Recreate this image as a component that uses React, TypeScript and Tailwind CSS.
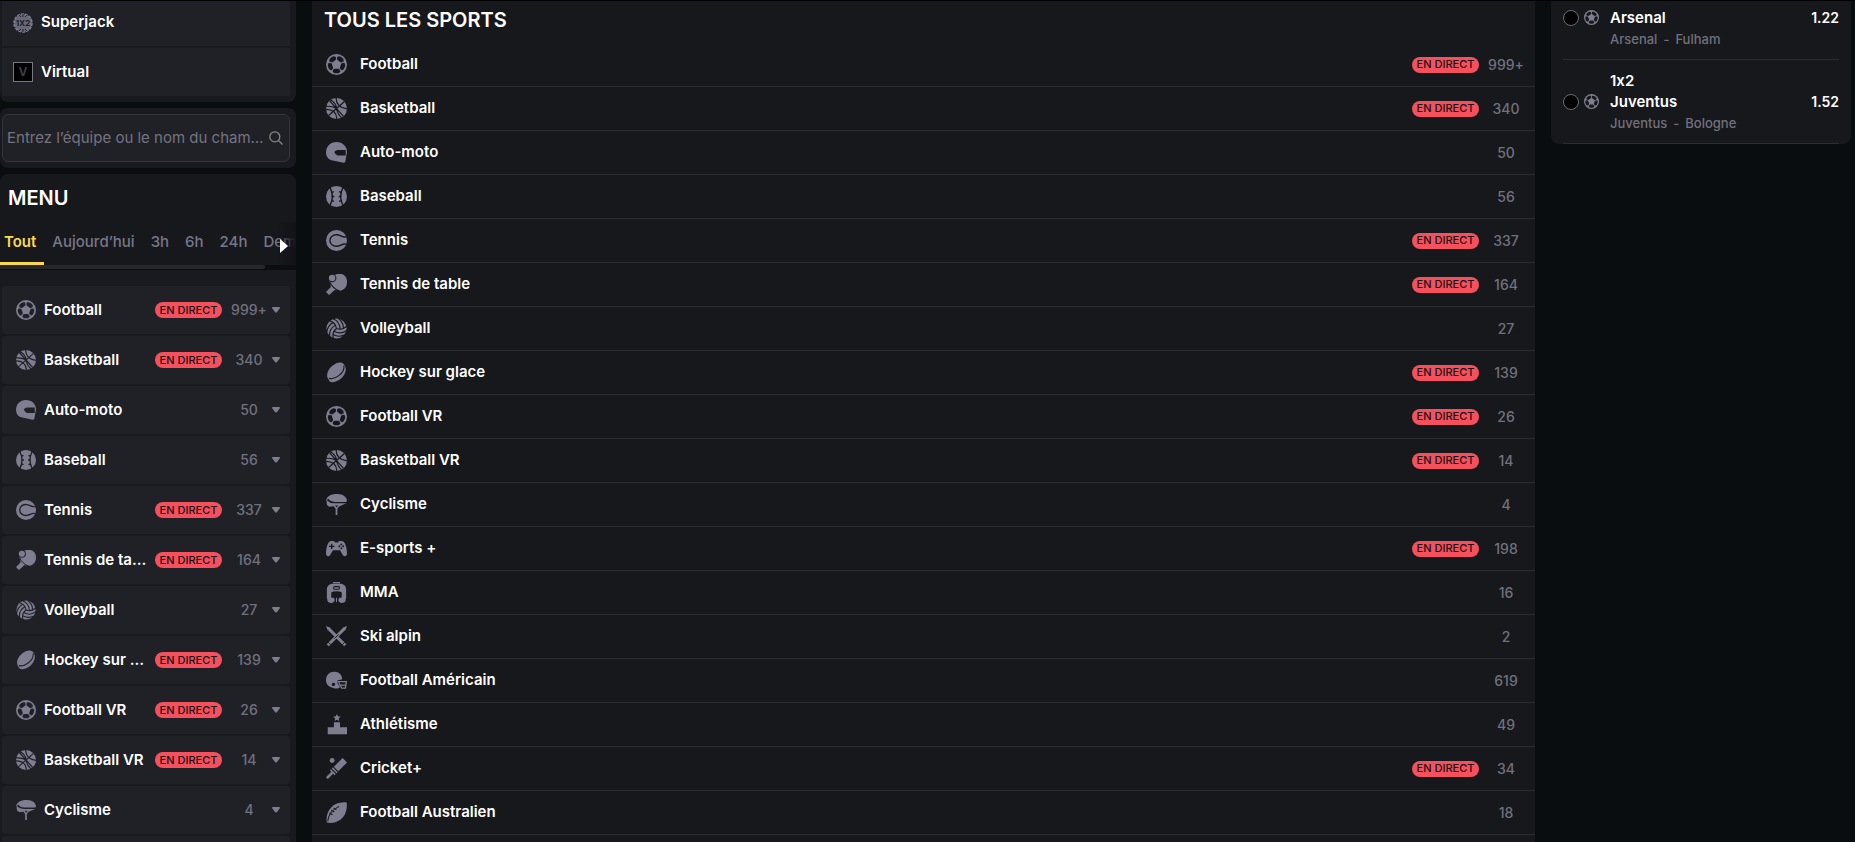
import React, { ReactNode } from "react";

const G = "#7f7e90";

const shapes: Record<string, ReactNode> = {
  football: (
    <>
      <circle cx="12" cy="12" r="12" fill={G} />
      {[0, 72, 144, 216, 288].map((a) => (
        <path
          key={a}
          fill="currentColor"
          transform={`rotate(${a} 12 12)`}
          d="M10 16.800h4q.8 0 1.300.7l1 1.700q.3.8-.4 1.400l-1.200 1q-2.700.8-5.400 0l-1.200-1q-.7-.6-.4-1.400l1-1.700q.5-.7 1.300-.7z"
        />
      ))}
    </>
  ),
  basketball: (
    <>
      <circle cx="12" cy="12" r="12" fill={G} />
      <g fill="none" stroke="currentColor" strokeWidth="1.400">
        <path d="M4 3l16 18M21 4 3 20M11.500 0Q12 11 24 12.500M5 2Q12 6 12 12M0 9.500Q7 9 12 12M0 13Q12 13 12.500 24M12 12Q13 18 18 23" />
      </g>
    </>
  ),
  helmet: (
    <>
      <path fill={G} d="M12 0C19 0 24 5 24 11.500L22 22.500Q21.500 24 20 23.700L5 20.500C1.500 18.500 0 15.500 0 12 0 5 5 0 12 0z" />
      <path fill="currentColor" d="M22.500 9H13Q9.500 10 9.500 11.500 10 13.500 13 15.500H22.500z" />
    </>
  ),
  baseball: (
    <>
      <circle cx="12" cy="12" r="12" fill={G} />
      <g fill="none" stroke="currentColor" strokeWidth="1.600">
        <path d="M4.500 1.500Q10 12 4.500 22.500M19.500 1.500Q14 12 19.500 22.500" />
        <path d="M6 7.500l3-1M6 16.500l3 1M18 7.500l-3-1M18 16.500l-3 1M6.500 12h3M17.500 12h-3" />
      </g>
    </>
  ),
  tennis: (
    <>
      <circle cx="12" cy="12" r="12" fill={G} />
      <path fill="none" stroke="currentColor" strokeWidth="1.600" d="M23.500 7.500C19 9.500 18 6 13 5.500 8 5 4.500 8 4.500 12s3.500 7 8.500 6.500C18 18 19 14.500 23.500 16.500" />
    </>
  ),
  paddle: (
    <>
      <path fill={G} d="M8 2C14-2 24-1 24 9c0 7-5 10-9 10-2.500 0-4.500-1.500-6 0l-1 1-4.500 4L0 20.500 5 15.500C6.500 14 4 11 4 7z" />
      <path fill="none" stroke="currentColor" strokeWidth="1.200" d="M4.500 9.500q3 7 11 10" />
      <circle cx="7" cy="4.500" r="4.900" fill="currentColor" />
      <circle cx="7" cy="4.500" r="3.700" fill={G} />
    </>
  ),
  volleyball: (
    <>
      <circle cx="12" cy="12" r="11.500" fill={G} />
      {[0, 120, 240].map((a) => (
        <path
          key={a}
          fill="none"
          stroke="currentColor"
          strokeWidth="1.300"
          transform={`rotate(${a} 12 12)`}
          d="M12 12Q11 5 3.500 3M16 12.800Q16 4 8 .8M20 12Q20 5 14 .3"
        />
      ))}
    </>
  ),
  puck: (
    <>
      <path fill={G} d="M3 20C-.500 16 1.500 9 7 4.500S18-.500 20.500 2.500L22 5c2 5-1 11-5.500 14.500S6 24 4 22z" />
      <path fill="none" stroke="currentColor" strokeWidth="1.300" d="M3.500 18.500C9 21 22 13 20.500 4" />
    </>
  ),
  bikeHelmet: (
    <>
      <path fill={G} d="M0 9C0 3 5 0 13 0c7 0 11 4 11 8l-1 1H10Q5 9 2.500 5.500 1 7 0 9z" />
      <path fill={G} d="M1.200 7.500Q4.500 10.700 9.500 10.700H23L14.500 14.500 13 17v7h-2v-7l-2-3-5 .500Q-.500 13 1.200 7.500z" />
      <path fill="currentColor" d="m10.500 13 1.500 2.500 1.800-2.500z" />
    </>
  ),
  gamepad: (
    <>
      <path fill={G} d="M6 3.500h3l1.500 1.500h3L15 3.500h3C22 3.500 24 12 24 17.500c0 4-3.500 4-5 1.500l-3-5H8l-3 5c-1.500 2.500-5 2.500-5-1.500C0 12 2 3.500 6 3.500z" />
      <path fill="none" stroke="currentColor" strokeWidth="1.500" d="M3.500 9.500h6M6.500 6.500v6" />
      <g fill="currentColor">
        <circle cx="17.500" cy="7.300" r="1.100" />
        <circle cx="17.500" cy="11.700" r="1.100" />
        <circle cx="15.300" cy="9.500" r="1.100" />
        <circle cx="19.700" cy="9.500" r="1.100" />
      </g>
    </>
  ),
  mma: (
    <>
      <path fill={G} d="M8 0h8v1.300H8zM6.500 2h11Q22.500 3 23 8v10l-1 4.500Q20 24 17 24q-3-1-3-3.500l1-2.500h3v-6q-1.500-1.500-6-1.500T6 12v6h3l1 2.500Q10 23 7 24q-3 0-5-1.500L1 18V8q.5-5 5.500-6z" />
      <rect x="8.800" y="5.300" width="6.400" height="3" rx="1" fill="none" stroke="currentColor" strokeWidth="1.200" />
      <path fill={G} d="M11.400 18h1.200v5h-1.200z" />
    </>
  ),
  ski: (
    <>
      <path stroke={G} strokeWidth="3.400" d="M3 3l19 19M21 3 2 22" />
      <path fill={G} d="M0 0l5 2-3 3zM24 0l-5 2 3 3z" />
      <path stroke="currentColor" strokeWidth="1" d="m9.500 14.500 5-5M2.500 18.500l3 3M21.500 18.500l-3 3" />
    </>
  ),
  footballHelmet: (
    <>
      <path fill={G} d="M9.500 2C15 2 18.500 6 18.500 10.500L13 12v3l3 4q-1 3-6 2L5 19.500C1.500 18 0 15 0 11.500 0 6 4 2 9.500 2z" />
      <circle cx="8.500" cy="16.500" r="1.900" fill="currentColor" />
      <path fill="none" stroke={G} strokeWidth="1.500" d="M13 13.200h10.200l-1 7.600H18l-3.500-6.500M16.500 17.200h6" />
    </>
  ),
  podium: (
    <path
      fill={G}
      d="m12.500 0 1.200 2.700 3 .3-2.200 2 .6 3-2.600-1.500L9.900 8l.6-3-2.200-2 3-.3zM9 9.500h7V15h8v8H2v-8h7z"
    />
  ),
  cricket: (
    <>
      <path fill={G} d="m19 0 5 5L14 15l-5-5z" />
      <path stroke={G} strokeWidth="1.800" d="m7.200 11.300 5.500 5.500M5 13.500l5.500 5.500" />
      <path stroke={G} strokeWidth="3" d="m7.500 16.500-6.500 6.500" />
      <circle cx="7" cy="2.800" r="2.800" fill={G} />
    </>
  ),
  aussie: (
    <>
      <path fill={G} d="M23.500.5C25 10 21 23 5 24l-4-.5C-1 14 5-1 23.500.5z" />
      <path fill="none" stroke="currentColor" strokeWidth="1.200" d="M2 22Q3 11 15 5M6 9.500l3.500 2M8.500 7l3.500 2M4 12.500l3.500 2" />
    </>
  ),
};

function Icon({ name, className }: { name: string; className: string }) {
  return (
    <svg viewBox="0 0 24 24" aria-hidden="true" className={`shrink-0 ${className}`}>
      {shapes[name]}
    </svg>
  );
}

type Sport = { name: string; icon: string; count: string; live?: boolean };

const sports: Sport[] = [
  { name: "Football", icon: "football", count: "999+", live: true },
  { name: "Basketball", icon: "basketball", count: "340", live: true },
  { name: "Auto-moto", icon: "helmet", count: "50" },
  { name: "Baseball", icon: "baseball", count: "56" },
  { name: "Tennis", icon: "tennis", count: "337", live: true },
  { name: "Tennis de table", icon: "paddle", count: "164", live: true },
  { name: "Volleyball", icon: "volleyball", count: "27" },
  { name: "Hockey sur glace", icon: "puck", count: "139", live: true },
  { name: "Football VR", icon: "football", count: "26", live: true },
  { name: "Basketball VR", icon: "basketball", count: "14", live: true },
  { name: "Cyclisme", icon: "bikeHelmet", count: "4" },
  { name: "E-sports +", icon: "gamepad", count: "198", live: true },
  { name: "MMA", icon: "mma", count: "16" },
  { name: "Ski alpin", icon: "ski", count: "2" },
  { name: "Football Américain", icon: "footballHelmet", count: "619" },
  { name: "Athlétisme", icon: "podium", count: "49" },
  { name: "Cricket+", icon: "cricket", count: "34", live: true },
  { name: "Football Australien", icon: "aussie", count: "18" },
];

const tabs = ["Tout", "Aujourd’hui", "3h", "6h", "24h", "Demain"];

const bets = [
  { pick: "Arsenal", home: "Arsenal", away: "Fulham", odds: "1.22" },
  { market: "1x2", pick: "Juventus", home: "Juventus", away: "Bologne", odds: "1.52" },
];

function Live() {
  return (
    <span className="flex h-4 w-[67px] shrink-0 items-center justify-center rounded-full bg-[#f4505e] text-[11px] font-medium whitespace-nowrap text-[#1c1013]">
      EN DIRECT
    </span>
  );
}

function Sidebar() {
  return (
    <aside className="flex w-[296px] shrink-0 flex-col gap-[6px]">
      <nav className="flex flex-col gap-[2px] rounded-b-lg bg-[#191a1f] pr-[6px] pb-[6px] pl-[2px] font-semibold text-white">
        <a href="#superjack" className="flex h-[45px] items-center gap-2 bg-[#202127] pb-[2px] pl-[11px]">
          <svg viewBox="0 0 20 20" className="size-5" aria-hidden="true">
            <circle cx="10" cy="10" r="9" fill="#686878" stroke="#7f7e90" strokeWidth="1.500" strokeDasharray="3 1" />
            <path d="M6 2l2 2M14 2l-2 2M6 18l2-2M14 18l-2-2M10 1v3M10 16v3" stroke="#202127" />
            <text x="10" y="12.800" textAnchor="middle" fontSize="8" fontWeight="700" fill="#202127">1X2</text>
          </svg>
          Superjack
        </a>
        <a href="#virtual" className="flex h-12 items-center gap-2 bg-[#202127] pl-[11px]">
          <span className="flex size-5 items-center justify-center border border-[#77777f] bg-black text-xs font-bold text-[#3d3d42]">V</span>
          Virtual
        </a>
      </nav>
      <div className="rounded-lg bg-[#191a1f] py-[6px] pr-[6px] pl-[2px]">
        <label className="flex h-12 items-center gap-[2px] rounded-md border border-[#34353c] bg-[#202127] pr-[6px] pl-1">
          <input
            type="text"
            aria-label="Recherche"
            placeholder="Entrez l’équipe ou le nom du championnat"
            className="min-w-0 flex-1 bg-transparent text-ellipsis outline-none placeholder:text-[#74747e]"
          />
          <svg viewBox="0 0 14 14" className="size-[14px]" fill="none" stroke="#85858f" strokeWidth="1.300" aria-hidden="true">
            <circle cx="5.800" cy="5.800" r="5" />
            <path d="m9.500 9.500 4 4" />
          </svg>
        </label>
      </div>
      <section className="rounded-t-lg bg-[#17181c]">
        <h2 className="flex h-12 items-center pl-2 text-xl font-semibold text-white">MENU</h2>
        <div className="relative">
          <div className="flex h-[43px] gap-2 overflow-hidden font-medium whitespace-nowrap text-[#77768a]">
            {tabs.map((t, i) => (
              <button
                key={t}
                className={
                  i === 0
                    ? "border-b-[3px] border-[#fcd94b] pr-2 pl-1 font-semibold text-[#fcdc4f]"
                    : "border-b-[3px] border-transparent pr-2"
                }
              >
                {t}
              </button>
            ))}
          </div>
          <div className="h-[5px] bg-[#0b0e11]">
            <div className="h-1 w-[265px] rounded-r bg-[#26282c]" />
          </div>
          <button aria-label="Suivant" className="absolute top-0 right-0 flex h-[43px] w-5 items-center bg-linear-to-r from-transparent to-[#111317] pl-1">
            <svg viewBox="0 0 8 14" className="mt-1 h-[14px] w-2" aria-hidden="true">
              <path d="M0 0l8 7-8 7z" fill="#fff" />
            </svg>
          </button>
        </div>
        <ul className="flex flex-col gap-[2px] bg-[#191a1f] pt-4 pr-[6px] pl-[2px]">
          {sports.slice(0, 12).map((s) => (
            <li key={s.name}>
              <a href="#sport" className="flex h-12 items-center rounded bg-[#202127] pl-[14px] text-[#202127]">
                <Icon name={s.icon} className="size-5" />
                <span className="mr-[6px] ml-2 min-w-0 flex-1 truncate font-semibold text-white">{s.name}</span>
                {s.live && <Live />}
                <span className="ml-1 w-[46px] shrink-0 text-center text-sm font-medium text-[#71717d]">{s.count}</span>
                <svg viewBox="0 0 8 6" className="mr-[10px] h-[6px] w-2 shrink-0" aria-hidden="true">
                  <path d="M1 0h6q1 0 1 1L5 5Q4 6 3 5L0 1q0-1 1-1z" fill="#7f7e8c" />
                </svg>
              </a>
            </li>
          ))}
        </ul>
      </section>
    </aside>
  );
}

export default function App() {
  return (
    <div className="flex h-screen items-start gap-4 overflow-hidden border-t border-black bg-[#090d10] pr-1 font-[Inter,sans-serif] text-[15px] [font-feature-settings:'calt'_0]">
      <Sidebar />
      <main className="h-full min-w-0 flex-1 bg-[#17181c]">
        <h1 className="flex h-[42px] items-center pb-1 pl-3 text-xl font-semibold text-white">TOUS LES SPORTS</h1>
        <ul>
          {sports.map((s) => (
            <li key={s.name} className="border-b border-[#2a2c31]">
              <a href="#sport" className="flex h-[43px] items-center pr-[2px] pl-[14px] text-[#17181c]">
                <Icon name={s.icon} className="size-[21px]" />
                <span className="ml-[13px] min-w-0 flex-1 truncate font-semibold text-white">{s.name}</span>
                {s.live && <Live />}
                <span className="w-[54px] shrink-0 text-center text-sm font-medium text-[#71717d]">{s.count}</span>
              </a>
            </li>
          ))}
        </ul>
      </main>
      <aside className="w-[300px] shrink-0 rounded-b-lg bg-[#17181c] px-3">
        {bets.map((b) => (
          <label
            key={b.pick}
            className={`grid grid-cols-[16px_15px_1fr_auto] items-center gap-x-[5px] border-b border-[#2c2d32] pb-[9px] font-semibold text-white ${b.market ? "pt-[10px]" : "pt-[6px]"}`}
          >
            {b.market && <span className="col-start-3 h-[21px] pl-[6px] leading-[21px]">{b.market}</span>}
            <input type="radio" name="bet" className="col-start-1 size-4 appearance-none rounded-full border border-[#6c6c76] bg-black" />
            <Icon name="football" className="size-[15px] text-[#17181c]" />
            <span className="h-[21px] pl-[6px] leading-[21px]">{b.pick}</span>
            <span className="text-sm leading-[21px]">{b.odds}</span>
            <span className="col-start-3 flex h-[22px] gap-[6px] pl-[6px] text-[13px] leading-[22px] font-medium text-[#71717d]">
              <span>{b.home}</span>
              <span>-</span>
              <span>{b.away}</span>
            </span>
          </label>
        ))}
      </aside>
    </div>
  );
}
